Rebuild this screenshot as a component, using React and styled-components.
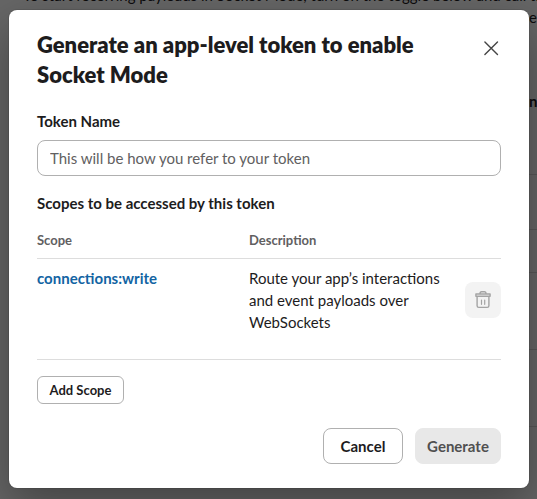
import React from "react";
import styled, { createGlobalStyle } from "styled-components";

const GlobalStyle = createGlobalStyle`
  *, *::before, *::after { box-sizing: border-box; }
  body {
    margin: 0;
    overflow: hidden;
    background: #666;
    color: #1d1c1d;
    font-family: Lato, "Liberation Sans", sans-serif;
    font-size: 15px;
    line-height: 22px;
  }
  button, input { font-family: inherit; }
`;

const Screen = styled.div`
  position: relative;
  height: 499px;
  overflow: hidden;
`;

const Backdrop = styled.div`
  position: absolute;
  inset: 0;
  color: #0c0b0c;
  white-space: nowrap;
`;

const Intro = styled.p`
  margin: -16px 0 0 23px;
  height: 22px;
`;

const EdgeText = styled.div`
  height: 22px;
  margin-top: ${(p) => p.$gap}px;
  padding-left: 529px;
  font-weight: ${(p) => (p.$bold ? 700 : 400)};
`;

const EdgeRow = styled.div`
  height: ${(p) => p.$height}px;
  margin-left: 516px;
  border-bottom: 1px solid #585858;
`;

const Overlay = styled.div`
  position: relative;
  display: flex;
  padding: 10px 8px 11px 9px;
`;

const Dialog = styled.section`
  display: flex;
  flex-direction: column;
  width: 520px;
  height: 478px;
  padding: 20px 28px 24px;
  border-radius: 8px;
  background: #fff;
  box-shadow: 0 0 0 1px rgba(29, 28, 29, 0.13), 0 18px 48px rgba(0, 0, 0, 0.35);
`;

const Header = styled.header`
  display: flex;
  justify-content: space-between;
  height: 60px;
`;

const Title = styled.h1`
  width: 400px;
  margin: 0;
  font-size: 22px;
  line-height: 30px;
  font-weight: 800;
`;

const CloseButton = styled.button`
  display: flex;
  align-items: center;
  justify-content: center;
  width: 36px;
  height: 36px;
  margin: 0 -8px 0 0;
  padding: 0;
  border: 0;
  background: none;
  color: #454545;
`;

const Label = styled.label`
  margin-top: 20px;
  font-weight: 700;
`;

const TextInput = styled.input`
  height: 36px;
  margin-top: 8px;
  padding: 0 12px 1px;
  border: 1px solid #b0b0b0;
  border-radius: 8px;
  background: #fff;
  font-size: 15px;
  &::placeholder { color: #616061; opacity: 1; }
`;

const SectionTitle = styled.h2`
  margin: 16px 0 0;
  font-size: 15px;
  line-height: 22px;
  font-weight: 700;
`;

const ScopeGrid = styled.div`
  display: grid;
  grid-template-columns: 212px 1fr 36px;
  border-bottom: 1px solid #ddd;
`;

const HeadRow = styled(ScopeGrid)`
  height: 45px;
  padding-top: 15px;
  color: #616061;
  font-size: 13px;
  font-weight: 700;
`;

const ScopeRow = styled(ScopeGrid)`
  height: 101px;
  padding-top: 8px;
`;

const ScopeLink = styled.a`
  color: #1264a3;
  font-weight: 700;
`;

const Description = styled.p`
  width: 200px;
  margin: 0;
`;

const DeleteButton = styled.button`
  display: flex;
  align-items: center;
  justify-content: center;
  width: 36px;
  height: 36px;
  margin-top: 15px;
  padding: 0;
  border: 0;
  border-radius: 8px;
  background: #f3f3f3;
  color: #a4a4a4;
`;

const Button = styled.button`
  height: ${(p) => (p.$small ? 28 : 36)}px;
  width: ${(p) => p.$width}px;
  padding: 0 0 1px;
  border: 1px solid #b0b0b0;
  border-radius: ${(p) => (p.$small ? 6 : 8)}px;
  background: #fff;
  color: #1d1c1d;
  font-size: ${(p) => (p.$small ? 13 : 15)}px;
  font-weight: 700;
  &:disabled {
    border-color: #e8e8e8;
    background: #e8e8e8;
    color: #505050;
  }
`;

const AddScopeButton = styled(Button)`
  margin-top: 16px;
`;

const Footer = styled.footer`
  display: flex;
  justify-content: flex-end;
  gap: 12px;
  margin-top: auto;
`;

const CloseIcon = () => (
  <svg width="20" height="20" viewBox="0 0 20 20" fill="none" stroke="currentColor" strokeWidth="1.4" strokeLinecap="round">
    <path d="M3.9 3.9l12.6 12.6M16.5 3.9L3.9 16.5" />
  </svg>
);

const TrashIcon = () => (
  <svg width="18" height="20" viewBox="0 0 18 20" fill="none" stroke="currentColor" strokeWidth="1.4" strokeLinecap="round" strokeLinejoin="round">
    <path d="M1.9 4h14.2v2.3H1.9zM6 3.8c0-1.4.6-2 1.6-2h2.8c1 0 1.6.6 1.6 2M3.1 6.5v9.2c0 1.1.6 1.7 1.7 1.7h8.4c1.1 0 1.7-.6 1.7-1.7V6.5" />
    <path d="M7.5 10v4.3M10.7 10v4.3" strokeWidth="1.2" />
  </svg>
);

export default function App() {
  return (
    <Screen>
      <GlobalStyle />
      <Backdrop aria-hidden="true">
        <Intro>To start receiving payloads in Socket Mode, turn on the toggle below and call the</Intro>
        <EdgeText $gap={0}>e</EdgeText>
        <EdgeText $gap={62} $bold>n</EdgeText>
        <EdgeRow $height={63} />
        <EdgeRow $height={55} />
        <EdgeRow $height={43} />
        <EdgeRow $height={77} />
        <EdgeRow $height={77} />
      </Backdrop>
      <Overlay>
        <Dialog role="dialog" aria-labelledby="dialog-title">
          <Header>
            <Title id="dialog-title">Generate an app-level token to enable Socket Mode</Title>
            <CloseButton aria-label="Close"><CloseIcon /></CloseButton>
          </Header>
          <Label htmlFor="token-name">Token Name</Label>
          <TextInput id="token-name" placeholder="This will be how you refer to your token" />
          <SectionTitle>Scopes to be accessed by this token</SectionTitle>
          <HeadRow>
            <span>Scope</span>
            <span>Description</span>
          </HeadRow>
          <ScopeRow>
            <ScopeLink>connections:write</ScopeLink>
            <Description>Route your app’s interactions and event payloads over WebSockets</Description>
            <DeleteButton aria-label="Delete scope"><TrashIcon /></DeleteButton>
          </ScopeRow>
          <AddScopeButton $small $width={87}>Add Scope</AddScopeButton>
          <Footer>
            <Button $width={80}>Cancel</Button>
            <Button $width={86} disabled>Generate</Button>
          </Footer>
        </Dialog>
      </Overlay>
    </Screen>
  );
}
